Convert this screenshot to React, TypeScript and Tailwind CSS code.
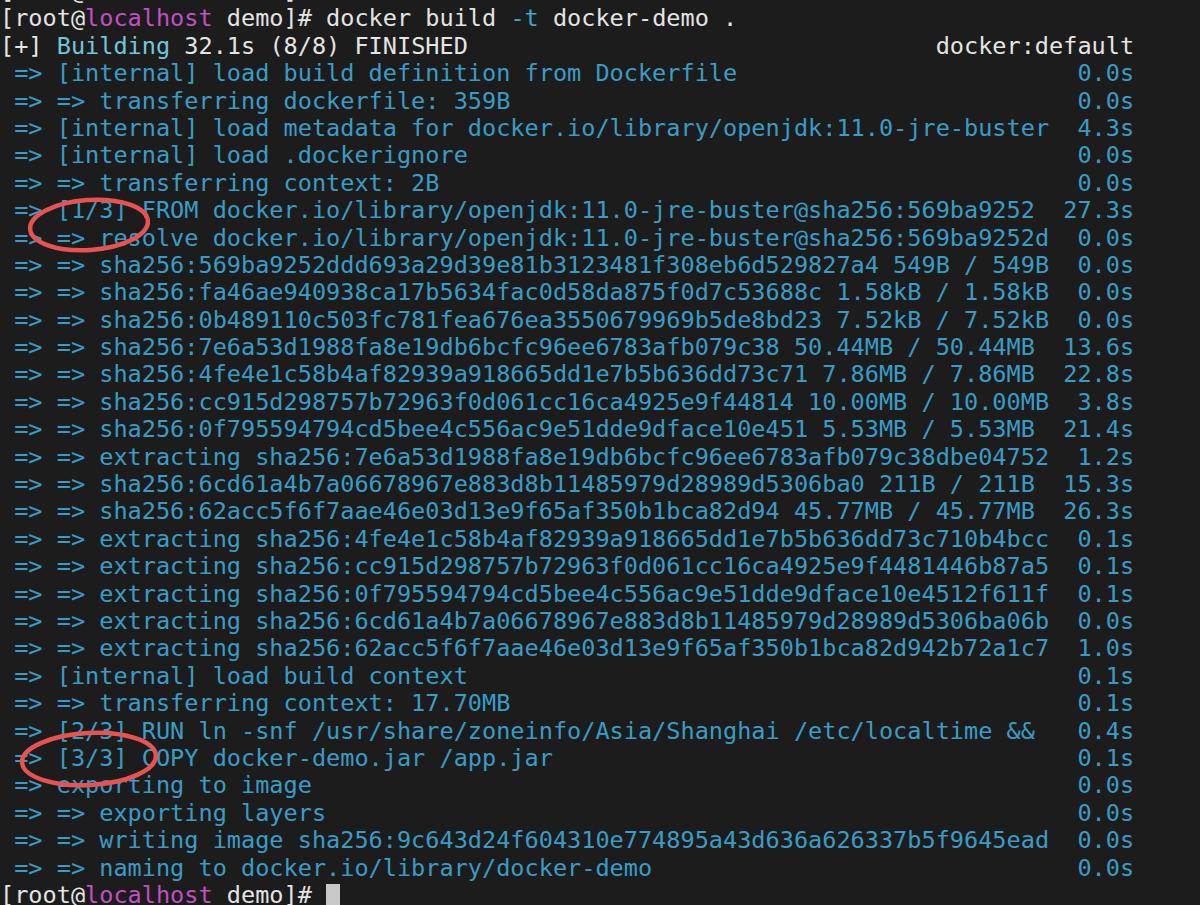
import React from "react";

const BLUE = "text-[#3a9cc6]";

type Line = { left: React.ReactNode; right?: string; cls?: string };

const Prompt = () => (
  <>
    <span className="text-[#e4e4e4]">[root@</span>
    <span className="text-[#c24fc6]">localhost</span>
    <span className="text-[#e4e4e4]"> demo]# </span>
  </>
);

const build: [string, string][] = [
  [" => [internal] load build definition from Dockerfile", "0.0s"],
  [" => => transferring dockerfile: 359B", "0.0s"],
  [" => [internal] load metadata for docker.io/library/openjdk:11.0-jre-buster", "4.3s"],
  [" => [internal] load .dockerignore", "0.0s"],
  [" => => transferring context: 2B", "0.0s"],
  [" => [1/3] FROM docker.io/library/openjdk:11.0-jre-buster@sha256:569ba9252", "27.3s"],
  [" => => resolve docker.io/library/openjdk:11.0-jre-buster@sha256:569ba9252d", "0.0s"],
  [" => => sha256:569ba9252ddd693a29d39e81b3123481f308eb6d529827a4 549B / 549B", "0.0s"],
  [" => => sha256:fa46ae940938ca17b5634fac0d58da875f0d7c53688c 1.58kB / 1.58kB", "0.0s"],
  [" => => sha256:0b489110c503fc781fea676ea3550679969b5de8bd23 7.52kB / 7.52kB", "0.0s"],
  [" => => sha256:7e6a53d1988fa8e19db6bcfc96ee6783afb079c38 50.44MB / 50.44MB", "13.6s"],
  [" => => sha256:4fe4e1c58b4af82939a918665dd1e7b5b636dd73c71 7.86MB / 7.86MB", "22.8s"],
  [" => => sha256:cc915d298757b72963f0d061cc16ca4925e9f44814 10.00MB / 10.00MB", "3.8s"],
  [" => => sha256:0f795594794cd5bee4c556ac9e51dde9dface10e451 5.53MB / 5.53MB", "21.4s"],
  [" => => extracting sha256:7e6a53d1988fa8e19db6bcfc96ee6783afb079c38dbe04752", "1.2s"],
  [" => => sha256:6cd61a4b7a06678967e883d8b11485979d28989d5306ba0 211B / 211B", "15.3s"],
  [" => => sha256:62acc5f6f7aae46e03d13e9f65af350b1bca82d94 45.77MB / 45.77MB", "26.3s"],
  [" => => extracting sha256:4fe4e1c58b4af82939a918665dd1e7b5b636dd73c710b4bcc", "0.1s"],
  [" => => extracting sha256:cc915d298757b72963f0d061cc16ca4925e9f4481446b87a5", "0.1s"],
  [" => => extracting sha256:0f795594794cd5bee4c556ac9e51dde9dface10e4512f611f", "0.1s"],
  [" => => extracting sha256:6cd61a4b7a06678967e883d8b11485979d28989d5306ba06b", "0.0s"],
  [" => => extracting sha256:62acc5f6f7aae46e03d13e9f65af350b1bca82d942b72a1c7", "1.0s"],
  [" => [internal] load build context", "0.1s"],
  [" => => transferring context: 17.70MB", "0.1s"],
  [" => [2/3] RUN ln -snf /usr/share/zoneinfo/Asia/Shanghai /etc/localtime &&", "0.4s"],
  [" => [3/3] COPY docker-demo.jar /app.jar", "0.1s"],
  [" => exporting to image", "0.0s"],
  [" => => exporting layers", "0.0s"],
  [" => => writing image sha256:9c643d24f604310e774895a43d636a626337b5f9645ead", "0.0s"],
  [" => => naming to docker.io/library/docker-demo", "0.0s"],
];

export default function App() {
  const lines: Line[] = [
    { left: <Prompt /> },
    {
      left: (
        <>
          <Prompt />
          <span className="text-[#e4e4e4]">docker build </span>
          <span className="text-[#3fa7c4]">-t</span>
          <span className="text-[#e4e4e4]"> docker-demo .</span>
        </>
      ),
    },
    {
      left: (
        <>
          <span className="text-[#e4e4e4]">[+] </span>
          <span className="text-[#70c8d8]">Building</span>
          <span className="text-[#e4e4e4]"> 32.1s (8/8) FINISHED</span>
        </>
      ),
      right: "docker:default",
      cls: "text-[#e4e4e4]",
    },
    ...build.map(([l, r]) => ({ left: l, right: r, cls: BLUE })),
    {
      left: (
        <>
          <Prompt />
          <span className="inline-block w-[1ch] h-[24px] align-[-5px] bg-[#c8c8c8]" />
        </>
      ),
    },
  ];

  return (
    <div className="relative w-[1200px] h-[905px] overflow-hidden bg-[#1c1c1c]">
      <div
        className="mt-[-22px] w-[80ch] text-[23.55px] leading-[27.4px] whitespace-pre"
        style={{ fontFamily: '"DejaVu Sans Mono", "Liberation Mono", monospace' }}
      >
        {lines.map((ln, i) => (
          <div key={i} className={`flex justify-between h-[27.4px] ${ln.cls ?? ""}`}>
            <span>{ln.left}</span>
            {ln.right ? <span>{ln.right}</span> : null}
          </div>
        ))}
      </div>
      <svg className="absolute inset-0 pointer-events-none" width="1200" height="905">
        <ellipse
          cx="89"
          cy="225"
          rx="59"
          ry="25"
          fill="none"
          stroke="#ea5252"
          strokeWidth="4.5"
          transform="rotate(-4 89 225)"
        />
        <ellipse
          cx="89"
          cy="759"
          rx="67"
          ry="26"
          fill="none"
          stroke="#ea5252"
          strokeWidth="4.5"
          transform="rotate(-3 89 759)"
        />
      </svg>
    </div>
  );
}
